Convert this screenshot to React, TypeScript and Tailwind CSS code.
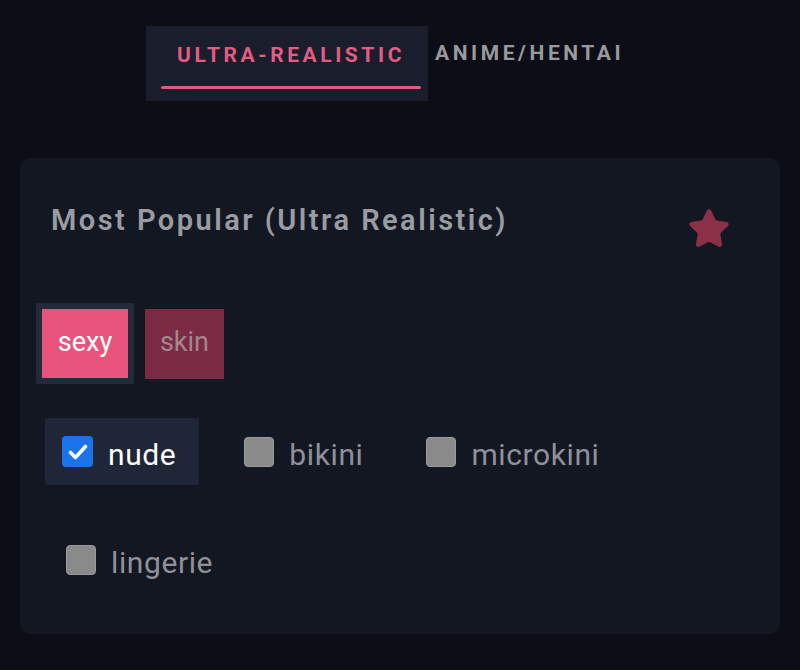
import { Star } from "lucide-react";

const Check = ({ checked, label }: { checked?: boolean; label: string }) => {
  return (
    <label
      className={
        "flex items-center gap-[15px] h-[67px] pl-[17px] rounded-[2px] " +
        (checked ? "pr-[23px] bg-[#1f2638] text-white" : "pr-[18px] text-[#8e919a]")
      }
    >
      {checked ? (
        <span className="w-[31px] h-[31px] rounded-[4px] bg-[#1a73e8] flex items-center justify-center">
          <svg viewBox="0 0 24 24" className="w-[24px] h-[24px]" fill="none" stroke="white" strokeWidth="3.6" strokeLinecap="round" strokeLinejoin="round">
            <path d="M4.5 12.5l5 5L19.5 6.5" />
          </svg>
        </span>
      ) : (
        <span className="w-[30px] h-[30px] rounded-[4px] bg-[#8a8a8a] border border-[#9b9b9b]" />
      )}
      <span className="text-[30px] tracking-[0.02em] leading-none pt-[6px]">{label}</span>
    </label>
  );
};

export default function App() {
  return (
    <div className="w-[800px] h-[670px] bg-[#0c0d16] overflow-hidden" style={{ fontFamily: "Roboto, 'Liberation Sans', sans-serif" }}>
      {/* Tabs */}
      <div className="flex items-start pl-[146px] pt-[26px]">
        <button className="w-[282px] h-[75px] bg-[#1a1d2b] flex flex-col items-center pt-[15px] pl-[8px]">
          <span className="text-[21px] font-bold tracking-[0.17em] text-[#e35c84] leading-[28px]">ULTRA-REALISTIC</span>
          <span className="mt-[17px] w-[260px] h-[3px] bg-[#e05a80] rounded-full" />
        </button>
        <button className="pl-[7px] pt-[13px] text-[21px] font-bold tracking-[0.17em] text-[#9a9a9e] leading-[28px]">
          ANIME/HENTAI
        </button>
      </div>

      {/* Card */}
      <div className="mx-[20px] mt-[57px] h-[476px] bg-[#131722] rounded-[10px] pl-[25px] pr-[49px] pt-[40px]">
        <div className="flex items-start justify-between pl-[6px]">
          <h2 className="text-[29px] font-semibold text-[#9a9ca3] tracking-[0.085em] leading-[44px]">
            Most Popular (Ultra Realistic)
          </h2>
          <Star className="w-[44px] h-[44px] mt-[9px] text-[#8b3047]" fill="#8b3047" strokeWidth={1.5} />
        </div>

        <div className="flex items-center gap-[11px] mt-[52px] -ml-[9px]">
          <div className="p-[6px] bg-[#232a3a] rounded-[2px]">
            <div className="w-[86px] h-[69px] bg-[#e9547c] flex items-center justify-center text-white text-[27px] pb-[2px]">
              sexy
            </div>
          </div>
          <div className="w-[79px] h-[70px] bg-[#7a2a42] flex items-center justify-center text-[#a3868f] text-[27px] pb-[2px]">
            skin
          </div>
        </div>

        <div className="flex flex-wrap gap-x-[28px] gap-y-[41px] mt-[34px]">
          <Check checked label="nude" />
          <Check label="bikini" />
          <Check label="microkini" />
          <div className="pl-[4px]">
            <Check label="lingerie" />
          </div>
        </div>
      </div>
    </div>
  );
}
